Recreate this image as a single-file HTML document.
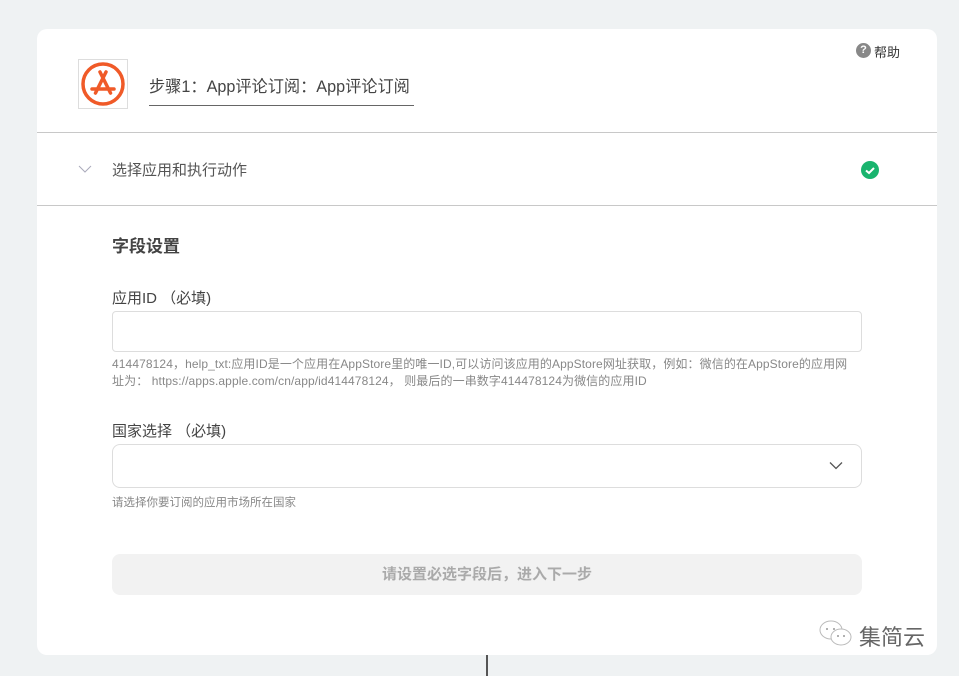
<!DOCTYPE html>
<html><head><meta charset="utf-8"><style>
body{margin:0;width:959px;height:676px;background:#eff2f3;font-family:"Liberation Sans","Noto Sans CJK SC",sans-serif;position:relative;overflow:hidden}
.card{position:absolute;left:37px;top:29px;width:900px;height:626px;background:#fff;border-radius:10px}
.a{position:absolute}
</style></head><body>
<div class="card"></div>
<div class="a" style="left:486px;top:655px;width:2px;height:21px;background:#555"></div>
<div class="a" style="left:78px;top:59px;width:48px;height:48px;border:1px solid #ddd;background:#fff">
<svg width="48" height="48" viewBox="0 0 48 48"><circle cx="24" cy="24" r="20" fill="none" stroke="#f05a28" stroke-width="3.5"/><path d="M21 12L31.5 33M27 12L16.5 33M13 29H35" stroke="#f05a28" stroke-width="3.5" stroke-linecap="round" fill="none"/></svg></div>
<div class="a" style="left:149px;top:73px;font-size:16.2px;color:#444">步骤1：App评论订阅：App评论订阅</div>
<div class="a" style="left:149px;top:105px;width:265px;height:1px;background:#666"></div>
<div class="a" style="left:856px;top:43px;width:15px;height:15px;border-radius:50%;background:#888;color:#fff;font-size:11px;font-weight:bold;text-align:center;line-height:15px">?</div>
<div class="a" style="left:874px;top:42px;font-size:13px;color:#333">帮助</div>
<div class="a" style="left:37px;top:132px;width:900px;height:1px;background:#c8c8c8"></div>
<svg class="a" style="left:78px;top:164px" width="14" height="10"><path d="M1 2l6 6 6-6" stroke="#aab" fill="none"/></svg>
<div class="a" style="left:112px;top:159px;font-size:15px;color:#555">选择应用和执行动作</div>
<svg class="a" style="left:861px;top:161px" width="18" height="18"><circle cx="9" cy="9" r="9" fill="#19b46e"/><path d="M5 9.5l3 2.5 5-5" stroke="#fff" stroke-width="2" fill="none"/></svg>
<div class="a" style="left:37px;top:205px;width:900px;height:1px;background:#c8c8c8"></div>
<div class="a" style="left:112px;top:232px;font-size:17px;font-weight:bold;color:#444">字段设置</div>
<div class="a" style="left:112px;top:287px;font-size:15px;color:#444">应用ID （必填)</div>
<div class="a" style="left:112px;top:311px;width:748px;height:39px;border:1px solid #ddd;border-radius:4px"></div>
<div class="a" style="left:112px;top:356px;width:746px;font-size:12px;letter-spacing:0.1px;line-height:17px;color:#888">414478124，help_txt:应用ID是一个应用在AppStore里的唯一ID,可以访问该应用的AppStore网址获取，例如：微信的在AppStore的应用网址为： https://apps.apple.com/cn/app/id414478124， 则最后的一串数字414478124为微信的应用ID</div>
<div class="a" style="left:112px;top:420px;font-size:15px;color:#444">国家选择 （必填)</div>
<div class="a" style="left:112px;top:444px;width:748px;height:42px;border:1px solid #ddd;border-radius:8px"></div>
<svg class="a" style="left:829px;top:461px" width="14" height="9"><path d="M1 1.5l6 6 6-6" stroke="#555" fill="none" stroke-width="1.3"/></svg>
<div class="a" style="left:112px;top:494px;font-size:11.5px;color:#888">请选择你要订阅的应用市场所在国家</div>
<div class="a" style="left:112px;top:554px;width:750px;height:41px;background:#f2f2f2;border-radius:8px;text-align:center;line-height:41px;font-size:15px;font-weight:bold;color:#aaa">请设置必选字段后，进入下一步</div>
<svg class="a" style="left:817px;top:618px" width="40" height="32"><ellipse cx="14" cy="12" rx="11" ry="9" fill="#fff" stroke="#bbb"/><ellipse cx="24" cy="19" rx="10" ry="8" fill="#fff" stroke="#bbb"/><circle cx="10" cy="11" r="1" fill="#999"/><circle cx="17" cy="11" r="1" fill="#999"/><circle cx="21" cy="18" r="1" fill="#999"/><circle cx="27" cy="18" r="1" fill="#999"/></svg>
<div class="a" style="left:859px;top:620px;font-size:22px;color:#666">集简云</div>
</body></html>
